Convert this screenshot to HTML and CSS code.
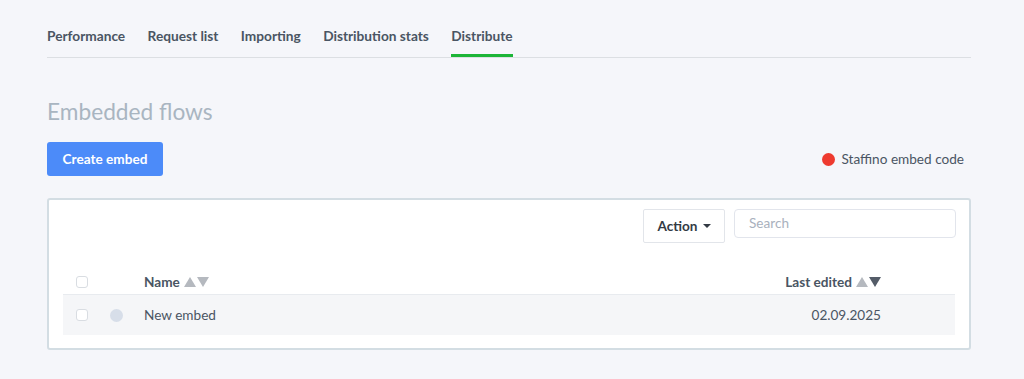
FILE: index.html
```html
<!DOCTYPE html>
<html>
<head>
<meta charset="utf-8">
<link rel="stylesheet" href="styles.css">
</head>
<body>
<div class="page">
  <nav class="tabs">
    <a class="tab">Performance</a>
    <a class="tab">Request list</a>
    <a class="tab">Importing</a>
    <a class="tab">Distribution stats</a>
    <a class="tab active">Distribute</a>
  </nav>
  <h1 class="title">Embedded flows</h1>
  <div class="toolbar">
    <button class="btn-primary">Create embed</button>
    <div class="embed-code"><span class="red-dot"></span>Staffino embed code</div>
  </div>
  <div class="card">
    <div class="card-top">
      <button class="btn-action">Action <span class="caret"></span></button>
      <div class="search">Search</div>
    </div>
    <div class="table">
      <div class="row head">
        <div class="c-check"><span class="checkbox"></span></div>
        <div class="c-dot"></div>
        <div class="c-name">Name <span class="sort"><span class="up"></span><span class="down"></span></span></div>
        <div class="c-date">Last edited <span class="sort"><span class="up"></span><span class="down dark"></span></span></div>
      </div>
      <div class="row data">
        <div class="c-check"><span class="checkbox"></span></div>
        <div class="c-dot"><span class="gray-dot"></span></div>
        <div class="c-name">New embed</div>
        <div class="c-date">02.09.2025</div>
      </div>
    </div>
  </div>
</div>
</body>
</html>
```
FILE: styles.css
```css
* { box-sizing: border-box; }
html, body { margin: 0; padding: 0; background: #f5f6fa; }
body { font-family: Lato, "Noto Sans", sans-serif; color: #4a5563; }
.page { padding: 0 53px 0 47px; }
.tabs {
  display: flex; gap: 22.4px; height: 58px; padding-top: 27px;
  border-bottom: 1px solid #dcdfe3;
}
.tab {
  font-size: 13.7px; font-weight: 700; color: #4a5563; line-height: 18px;
  height: 30px; border-bottom: 3px solid transparent;
}
.tab.active { border-bottom-color: #1cb537; }
.title {
  margin: 40px 0 0; font-size: 22.7px; font-weight: 400; color: #a9b5c1; line-height: 28px;
}
.toolbar {
  display: flex; justify-content: space-between; align-items: center; margin-top: 16px;
}
.btn-primary {
  width: 116px; height: 34px; border: none; border-radius: 3px; background: #4c8bf9;
  color: #fff; font-family: inherit; font-size: 13.6px; font-weight: 700; padding: 0;
}
.embed-code { display: flex; align-items: center; font-size: 13.6px; color: #4a5563; margin-right: 7px; }
.red-dot { width: 13px; height: 13px; border-radius: 50%; background: #ee3a2f; margin-right: 6px; }
.card {
  margin-top: 22px; background: #fff; border: 2px solid #d3dde3; border-radius: 3px;
  padding: 9px 13px 13px 14px;
}
.card-top { display: flex; justify-content: flex-end; gap: 9px; }
.btn-action {
  width: 82px; height: 34px; background: #fff; border: 1px solid #e2e5ea; border-radius: 2px;
  font-family: inherit; font-size: 13.6px; font-weight: 700; color: #333a44; padding: 0;
  display: flex; align-items: center; justify-content: center; gap: 5px;
}
.caret { width: 0; height: 0; border-left: 4px solid transparent; border-right: 4px solid transparent; border-top: 4px solid #333a44; }
.search {
  width: 222px; height: 29px; border: 1px solid #e2e5ec; border-radius: 4px;
  font-size: 13.6px; color: #a9b1bd; padding: 6px 14px; line-height: 15px;
}
.table { margin-top: 26px; margin-right: 1px; }
.row { display: flex; align-items: center; }
.row.head { height: 26px; border-bottom: 1px solid #e8ebef; }
.row.data { height: 40px; background: #f5f6f8; }
.c-check { width: 47px; padding-left: 13px; display: flex; }
.c-dot { width: 34px; display: flex; }
.c-name { flex: 1; font-size: 13.6px; display: flex; align-items: center; }
.c-date { width: 210px; padding-right: 74px; text-align: right; font-size: 13.6px; display: flex; justify-content: flex-end; align-items: center; }
.head .c-name, .head .c-date { font-weight: 700; color: #4a5563; }
.checkbox { width: 12px; height: 12px; border: 1px solid #d9dde2; border-radius: 3px; background: #fff; }
.gray-dot { width: 13px; height: 13px; border-radius: 50%; background: #d7dee9; }
.sort { display: inline-flex; gap: 1px; margin-left: 4px; }
.up { width: 0; height: 0; border-left: 6px solid transparent; border-right: 6px solid transparent; border-bottom: 10px solid #b5b9bf; }
.down { width: 0; height: 0; border-left: 6px solid transparent; border-right: 6px solid transparent; border-top: 10px solid #b5b9bf; }
.down.dark { border-top-color: #545c68; }
```
